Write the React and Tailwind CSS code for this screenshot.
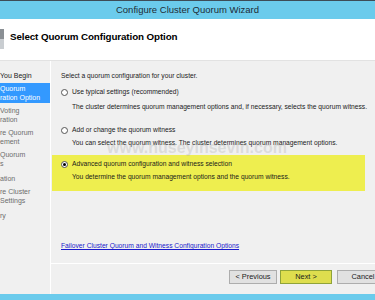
import React from 'react';

const font = { fontFamily: '"Liberation Sans", Arial, sans-serif' };

const Radio = ({ checked }) => (
  <span className="w-[7px] h-[7px] rounded-full border border-[#555] bg-white flex items-center justify-center shrink-0">
    {checked && <span className="w-[3px] h-[3px] rounded-full bg-black"></span>}
  </span>
);

const NavItem = ({ lines, className, color = 'text-[#6d6d6d]' }) => (
  <div className={`${className} ${color} leading-[9px]`}>
    {lines.map((l, i) => <div key={i} className="whitespace-nowrap">{l}</div>)}
  </div>
);

const App = () => {
  return (
    <div className="w-[375px] h-[300px] overflow-hidden bg-[#f0f0f0] flex flex-col" style={font}>
      <div className="h-px bg-[#3d4c57]"></div>
      {/* title bar */}
      <div className="h-[18px] bg-[#6bcbec] flex items-center justify-center text-[9.5px] text-[#1e2c36]">
        Configure Cluster Quorum Wizard
      </div>

      {/* header */}
      <div className="h-[42px] bg-white flex items-start border-b border-[#e2e2e2]">
        <div className="w-[4px] h-[20px] mt-[10px] flex flex-col">
          <div className="h-[10px] bg-[#8a8f94]"></div>
          <div className="h-[10px] bg-[#c9cdd1]"></div>
        </div>
        <div className="ml-[6px] mt-[11px] text-[9.8px] font-bold text-black tracking-[-0.1px]">
          Select Quorum Configuration Option
        </div>
      </div>

      <div className="flex h-[233px]">
        {/* left nav */}
        <div className="w-[50px] shrink-0 overflow-hidden text-[7px] pt-[10px] flex flex-col">
          <NavItem lines={['You Begin']} color="text-[#222]" />
          <NavItem lines={['Quorum', 'ration Option']} color="text-white" className="mt-[3px] bg-[#3399ff] py-[1px] h-[20px]" />
          <NavItem lines={['Voting', 'ration']} className="mt-[3px]" />
          <NavItem lines={['re Quorum', 'ement']} className="mt-[4px]" />
          <NavItem lines={['Quorum', 's']} className="mt-[4px]" />
          <NavItem lines={['ation']} className="mt-[6px]" />
          <NavItem lines={['re Cluster', ' Settings']} className="mt-[4px]" />
          <NavItem lines={['ry']} className="mt-[6px]" />
        </div>
        <div className="w-px shrink-0 bg-white"></div>

        {/* content */}
        <div className="flex-1 min-w-0 flex flex-col">
          <div className="relative h-[203px] pl-[10px] pt-[10px] flex flex-col text-[6.7px] text-[#1a1a1a] leading-[10px] border-b border-white">
            <div>Select a quorum configuration for your cluster.</div>

            <div className="mt-[6px] flex items-center gap-[4px]">
              <Radio />
              <span>Use typical settings (recommended)</span>
            </div>
            <div className="mt-[5px] ml-[11px] whitespace-nowrap">
              The cluster determines quorum management options and, if necessary, selects the quorum witness.
            </div>

            <div className="mt-[13px] flex items-center gap-[4px]">
              <Radio />
              <span>Add or change the quorum witness</span>
            </div>
            <div className="mt-[3px] ml-[11px] whitespace-nowrap">
              You can select the quorum witness. The cluster determines quorum management options.
            </div>

            <div className="mt-[7px] -ml-[9px] w-[313px] bg-[#eeee4f] pl-[9px] pt-[4px] pb-[9px]">
              <div className="flex items-center gap-[4px]">
                <Radio checked />
                <span>Advanced quorum configuration and witness selection</span>
              </div>
              <div className="mt-[3px] ml-[11px]">
                You determine the quorum management options and the quorum witness.
              </div>
            </div>

            <div className="mt-auto mb-[12px] text-[#1a1acc] underline">
              Failover Cluster Quorum and Witness Configuration Options
            </div>

            <div className="absolute left-[56px] top-[79px] text-[16px] leading-[16px] font-bold text-[#a8a8a8]/30 pointer-events-none">
              www.huseyinsevin.com
            </div>
          </div>

          {/* buttons */}
          <div className="flex-1 flex items-start pt-[6px] pl-[178px] gap-[3px] text-[7.4px] text-[#1a1a1a]">
            <div className="w-[48px] h-[14px] border border-[#adadad] bg-[#e1e1e1] flex items-center justify-center shrink-0">
              &lt; Previous
            </div>
            <div className="w-[52px] h-[14px] border border-[#8fa33a] bg-[#dede4e] flex items-center justify-center shrink-0">
              Next &gt;
            </div>
            <div className="ml-[2px] w-[52px] h-[14px] border border-[#adadad] bg-[#e1e1e1] flex items-center justify-center shrink-0">
              Cancel
            </div>
          </div>
        </div>
      </div>

      <div className="flex-1 bg-[#6bcbec]"></div>
    </div>
  );
};

export default App;
